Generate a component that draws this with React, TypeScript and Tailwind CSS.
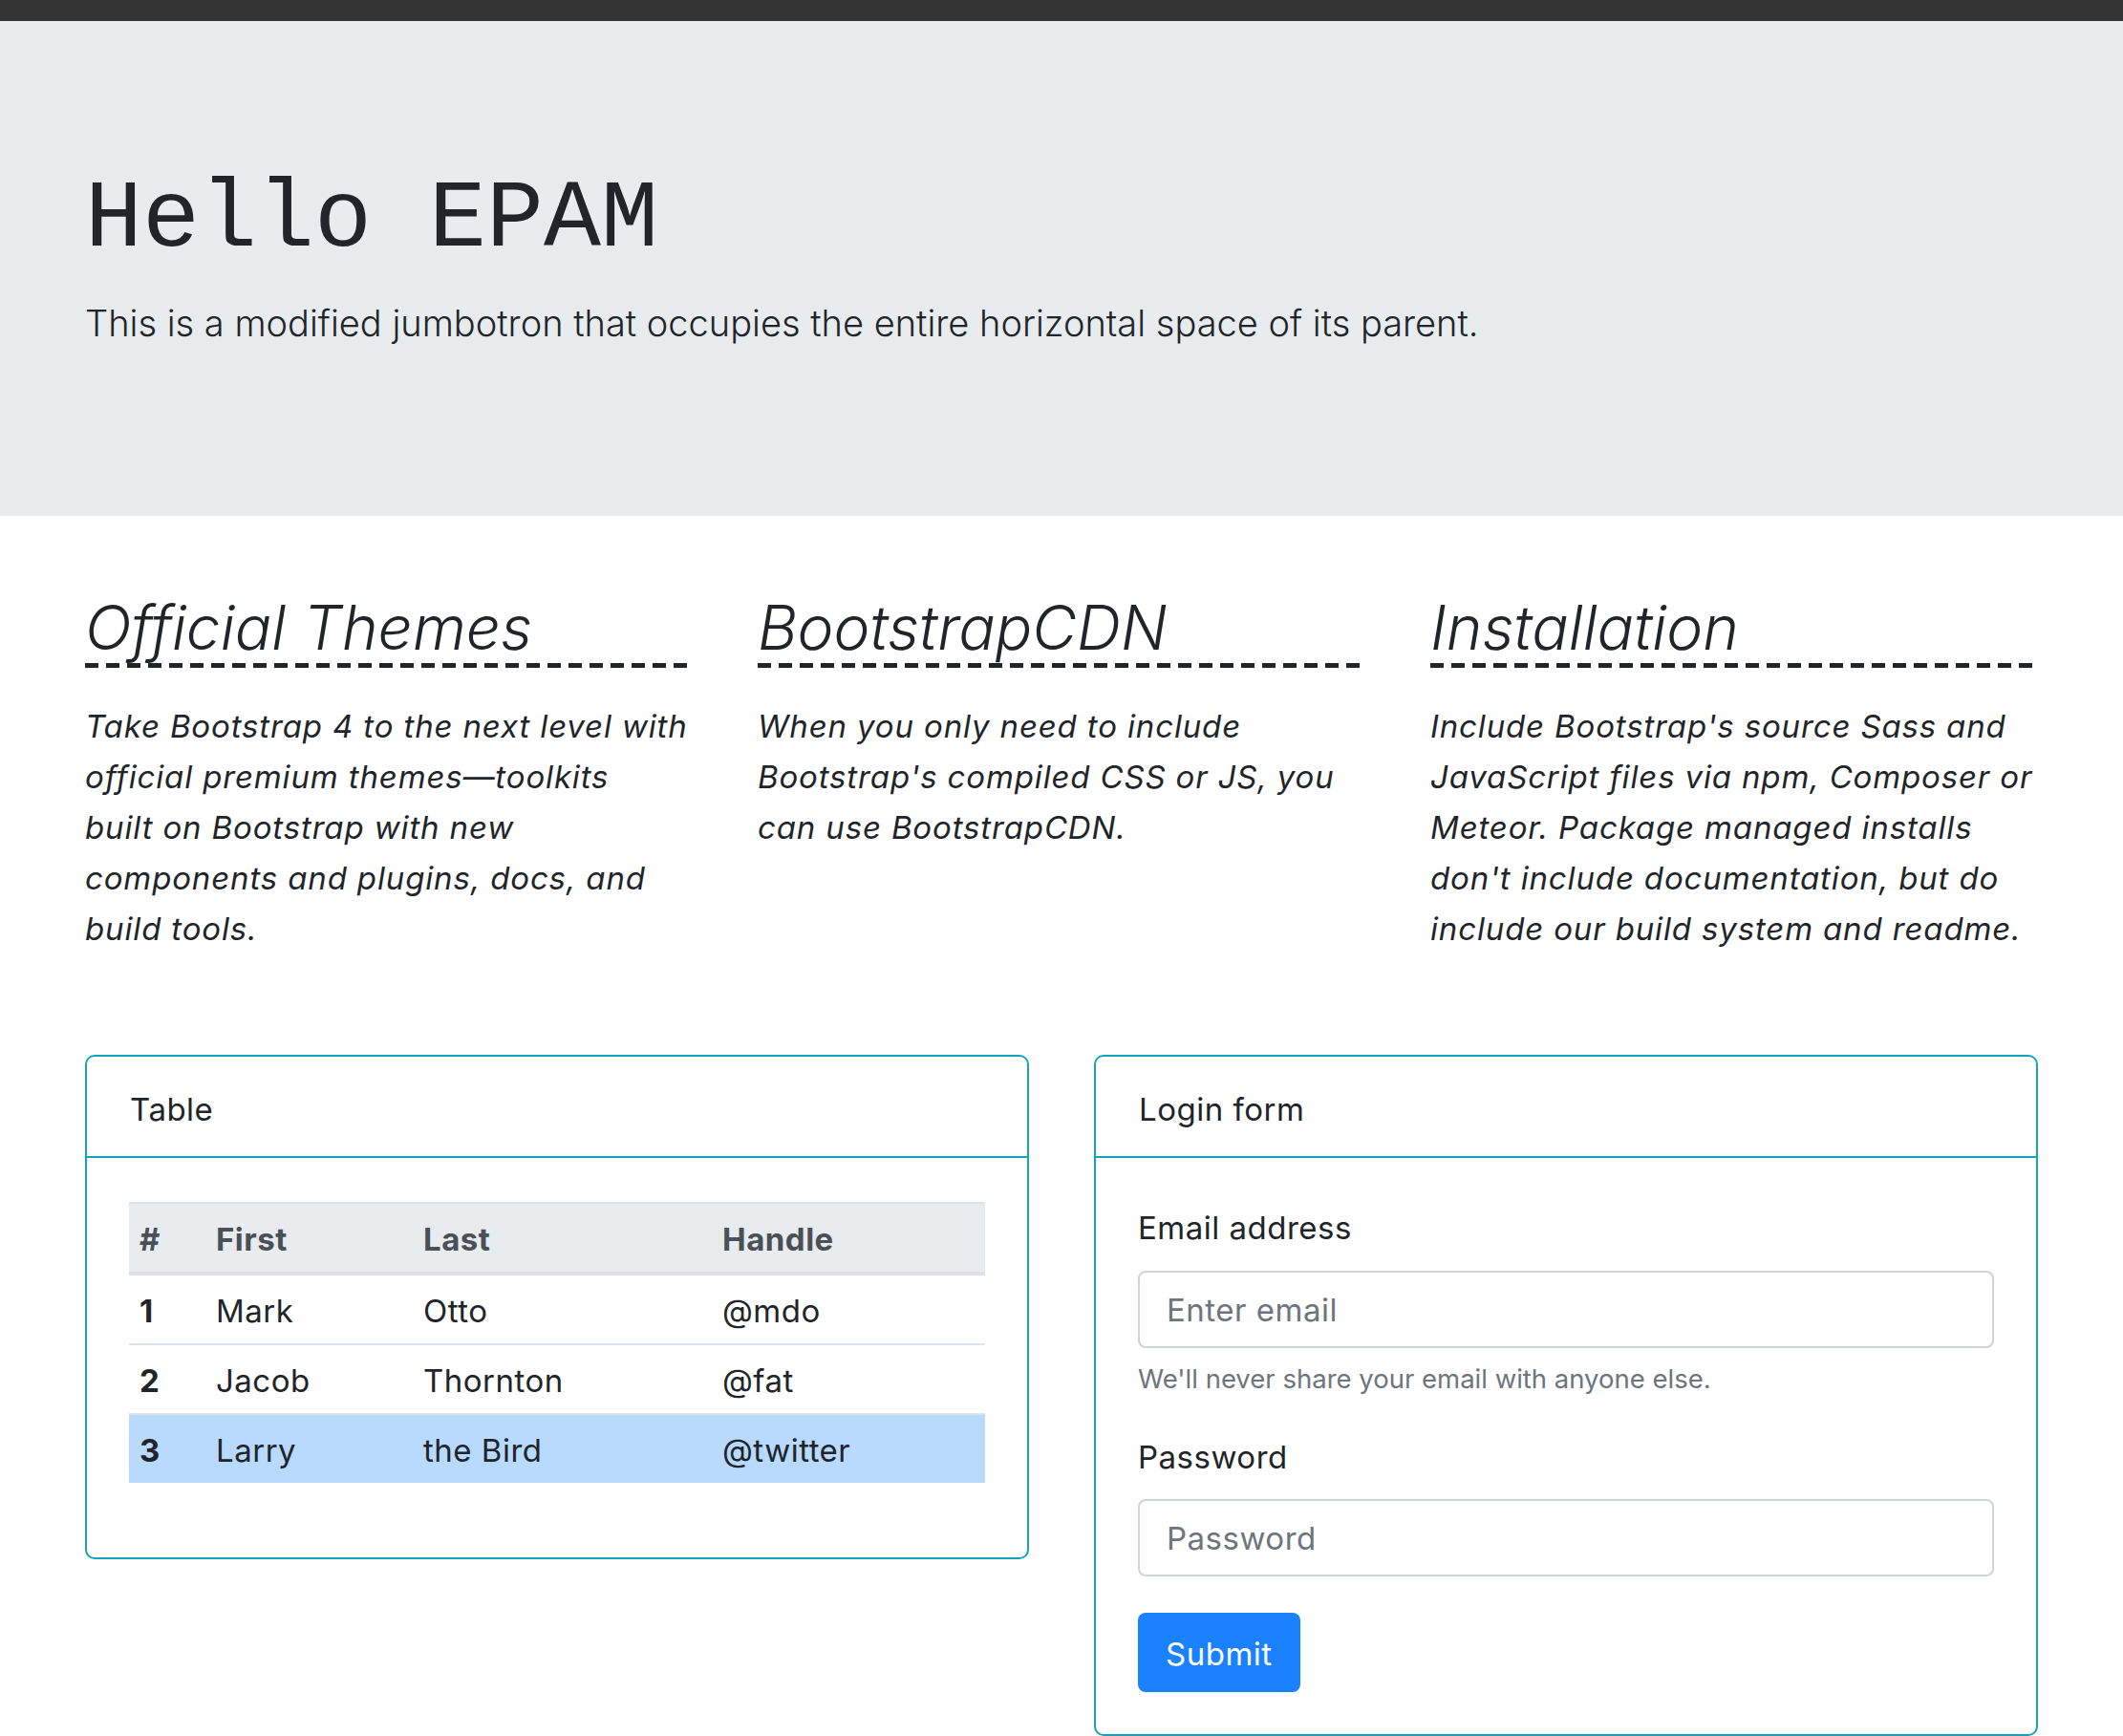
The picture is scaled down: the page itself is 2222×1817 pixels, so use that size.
import React from 'react';

// ── 데이터 (줄바꿈은 원본 화면과 같게 맞춤) ─────────────────────────────
const features = [
  {
    title: 'Official Themes',
    lines: [
      'Take Bootstrap 4 to the next level with',
      'official premium themes—toolkits',
      'built on Bootstrap with new',
      'components and plugins, docs, and',
      'build tools.',
    ],
  },
  {
    title: 'BootstrapCDN',
    lines: [
      'When you only need to include',
      "Bootstrap's compiled CSS or JS, you",
      'can use BootstrapCDN.',
    ],
  },
  {
    title: 'Installation',
    lines: [
      "Include Bootstrap's source Sass and",
      'JavaScript files via npm, Composer or',
      'Meteor. Package managed installs',
      "don't include documentation, but do",
      'include our build system and readme.',
    ],
  },
];

const people = [
  { id: 1, first: 'Mark', last: 'Otto', handle: '@mdo' },
  { id: 2, first: 'Jacob', last: 'Thornton', handle: '@fat' },
  { id: 3, first: 'Larry', last: 'the Bird', handle: '@twitter', active: true },
];

// ── 카드 ───────────────────────────────────────────────────────────────
const Card: React.FC<{ title: string; bodyClass: string; children: React.ReactNode }> = ({
  title,
  bodyClass,
  children,
}) => (
  <div className="border-2 border-[#17a2b8] rounded-[10px] bg-white">
    <div className="px-[45px] pt-[31px] pb-[25px] border-b-2 border-[#17a2b8] text-[33px] tracking-[0.5px] leading-[48px]">
      {title}
    </div>
    <div className={bodyClass}>{children}</div>
  </div>
);

const cell = 'px-[11px] pt-[13px] pb-[10px] border-t-2 border-[#dee2e6]';
const headCell = 'px-[11px] pt-[13px] pb-[10px] border-t-2 border-b-4 border-[#dee2e6] font-bold';

const App: React.FC = () => {
  return (
    <div className="min-h-screen bg-white text-[#212529] font-['Inter','Noto_Sans',sans-serif]">
      {/* 상단 바 */}
      <div className="h-[22px] bg-[#333333]" />

      {/* 점보트론 */}
      <section className="bg-[#e9ecef] px-[89px] pt-[149px] pb-[172px]">
        <h1 className="font-['Liberation_Mono','Courier_New',monospace] text-[100px] leading-[120px] mb-[17px]">
          Hello EPAM
        </h1>
        <p className="text-[38px] font-light leading-[60px]">
          This is a modified jumbotron that occupies the entire horizontal space of its parent.
        </p>
      </section>

      <div className="px-[89px]">
        {/* 소개 3단 */}
        <div className="grid grid-cols-3 gap-x-[68px] mt-[79px]">
          {features.map((f) => (
            <div key={f.title}>
              <h2 className="italic font-light text-[64px] leading-[75px]">{f.title}</h2>
              <div className="h-[5px] bg-[repeating-linear-gradient(90deg,#212529_0px,#212529_14px,transparent_14px,transparent_22px)]" />
              <p className="mt-[35px] italic text-[33px] tracking-[0.85px] leading-[53px]">
                {f.lines.map((line, i) => (
                  <React.Fragment key={i}>
                    {i > 0 && <br />}
                    {line}
                  </React.Fragment>
                ))}
              </p>
            </div>
          ))}
        </div>

        {/* 카드 2단 */}
        <div className="grid grid-cols-2 gap-x-[68px] items-start mt-[105px]">
          <Card title="Table" bodyClass="px-[44px] pt-[46px] pb-[44px]">
            <table className="w-full border-collapse text-[33px] tracking-[0.5px] leading-[48px] mb-[34px]">
              <thead>
                <tr className="bg-[#e9ecef] text-[#495057] text-left">
                  <th className={`w-[80px] ${headCell}`}>#</th>
                  <th className={`w-[217px] ${headCell}`}>First</th>
                  <th className={`w-[313px] ${headCell}`}>Last</th>
                  <th className={headCell}>Handle</th>
                </tr>
              </thead>
              <tbody>
                {people.map((p) => (
                  <tr key={p.id} className={p.active ? 'bg-[#b8daff]' : ''}>
                    <th className={`${cell} text-left font-bold`}>{p.id}</th>
                    <td className={cell}>{p.first}</td>
                    <td className={cell}>{p.last}</td>
                    <td className={cell}>{p.handle}</td>
                  </tr>
                ))}
              </tbody>
            </table>
          </Card>

          <Card title="Login form" bodyClass="px-[44px] pt-[46px] pb-[44px]">
            <form onSubmit={(e) => e.preventDefault()} className="text-[33px] tracking-[0.5px]">
              <label className="block pt-[3px] leading-[48px] mb-[21px]">Email address</label>
              <input
                type="email"
                placeholder="Enter email"
                className="block w-full h-[81px] px-[28px] border-2 border-[#ced4da] rounded-[8px] placeholder:text-[#6c757d] outline-none"
              />
              <small className="block mt-[13px] text-[27.5px] tracking-normal leading-[38px] text-[#6c757d]">
                We'll never share your email with anyone else.
              </small>

              <label className="block mt-[39px] leading-[48px] mb-[20px]">Password</label>
              <input
                type="password"
                placeholder="Password"
                className="block w-full h-[81px] px-[28px] border-2 border-[#ced4da] rounded-[8px] placeholder:text-[#6c757d] outline-none"
              />

              <button
                type="submit"
                className="mt-[38px] h-[83px] px-[29px] pt-[5px] bg-[#1a82ff] text-white rounded-[8px]"
              >
                Submit
              </button>
            </form>
          </Card>
        </div>
      </div>
    </div>
  );
};

export default App;
